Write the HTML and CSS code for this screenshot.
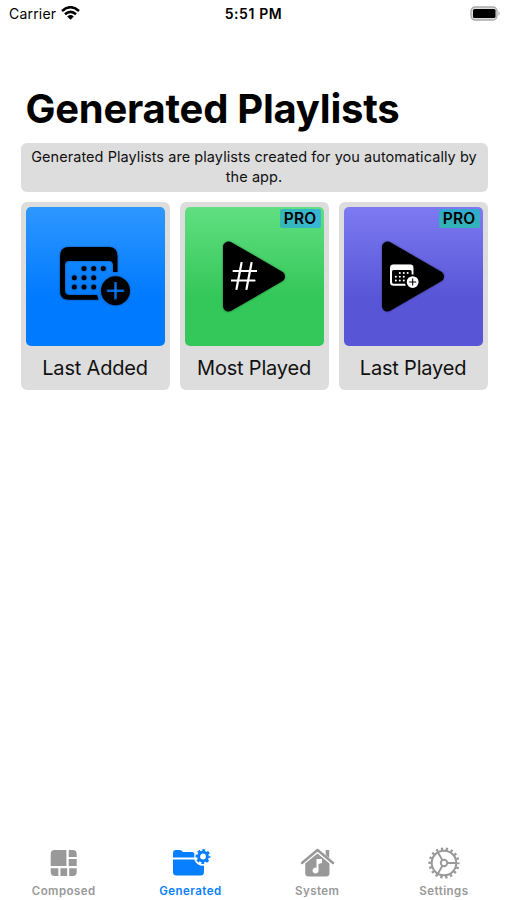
FILE: index.html
```
<!DOCTYPE html>
<html lang="en">
<head>
<meta charset="utf-8">
<title>Generated Playlists</title>
<link rel="stylesheet" href="styles.css">
</head>
<body>
<svg width="0" height="0" class="defs" aria-hidden="true">
  <symbol id="calendar" viewBox="0 0 71 59">
    <path fill-rule="evenodd" d="M9 0H48.500Q57.500 0 57.500 9V25H53V18Q53 14 49 14H9Q5 14 5 18V43.500Q5 48 9.500 48H37L38.500 52.700H9Q0 52.700 0 44V9Q0 0 9 0Z"/>
    <g>
      <circle cx="24" cy="21.400" r="2.500"/><circle cx="33.700" cy="21.400" r="2.500"/><circle cx="43.300" cy="21.400" r="2.500"/>
      <circle cx="14.300" cy="30.700" r="2.500"/><circle cx="24" cy="30.700" r="2.500"/><circle cx="33.700" cy="30.700" r="2.500"/>
      <circle cx="14.300" cy="40" r="2.500"/><circle cx="24" cy="40" r="2.500"/><circle cx="33.700" cy="40" r="2.500"/>
    </g>
    <path fill-rule="evenodd" d="M55.500 29.200a14.500 14.500 0 1 1 0 29a14.500 14.500 0 1 1 0-29ZM54.200 35V42.400H46.800V45H54.200V52.400H56.800V45H64.200V42.400H56.800V35Z"/>
  </symbol>
  <symbol id="play" viewBox="0 0 63 71">
    <path d="M5.500 6V65L56.500 35.500Z" stroke="#000" stroke-width="11" stroke-linejoin="round"/>
  </symbol>
</svg>

<div class="screen">
  <header class="status">
    <div class="carrier"><span>Carrier</span>
      <svg width="19" height="14" viewBox="0 0 19 14"><g fill="none" stroke="#000" stroke-width="2.500"><path d="M1 5Q9.500-2.600 18 5"/><path d="M4 8.300Q9.500 3.400 15 8.300"/></g><path d="M6.200 10.400Q9.500 7.700 12.800 10.400L9.500 13.800Z"/></svg>
    </div>
    <div class="time">5:51 PM</div>
    <svg class="battery" width="31" height="15" viewBox="0 0 31 15"><rect x="1" y="1" width="26" height="13" rx="4" fill="#ddd" stroke="#aaa" stroke-width="1.300"/><rect x="3" y="3" width="22.500" height="9" rx="1.500"/><path d="M28.500 5Q31 7.500 28.500 10Z" fill="#aaa"/></svg>
  </header>

  <main>
    <h1>Generated Playlists</h1>
    <p class="note">Generated Playlists are playlists created for you automatically by<br>the app.</p>
    <section class="cards">
      <article class="card">
        <div class="tile blue"><svg class="cal" width="71" height="59"><use href="#calendar"/></svg></div>
        <h2>Last Added</h2>
      </article>
      <article class="card">
        <div class="tile green"><span class="pro">PRO</span>
          <div class="play"><svg width="63" height="71"><use href="#play"/></svg><svg class="hash" width="26" height="28" viewBox="0 0 26 28"><path d="M10.500 1L5.500 27M20.500 1L15.500 27M2.500 9H25.500M.5 18.500H23.500" fill="none" stroke="#fff" stroke-width="2.200" stroke-linecap="round"/></svg></div>
        </div>
        <h2>Most Played</h2>
      </article>
      <article class="card">
        <div class="tile purple"><span class="pro">PRO</span>
          <div class="play"><svg width="63" height="71"><use href="#play"/></svg><svg class="mini" width="29" height="24.500" viewBox="0 0 71 59"><use href="#calendar"/></svg></div>
        </div>
        <h2>Last Played</h2>
      </article>
    </section>
  </main>

  <nav class="tabs">
    <a class="tab"><svg width="40" height="34" viewBox="-.7 0 40 34"><path d="M11 4H22.700V20H7V8Q7 4 11 4ZM25 4H29Q33 4 33 8V11H25ZM25 13H33V20H25ZM7 22.300H14.700V30H11Q7 30 7 26ZM16.700 22.300H23.500V30H16.700ZM25.500 22.300H33V26Q33 30 29 30H25.500Z"/></svg><span>Composed</span></a>
    <a class="tab active"><svg width="42" height="34" viewBox="-2.500 0 42 34"><path d="M1.500 11.500V7Q1.500 4 4.500 4H8Q10 4 11.500 6H20.500Q22.500 6 22.800 7.500V11.500ZM1.500 13.500H22.800Q25 20 32.500 19.800V26Q32.500 29.500 29 29.500H5Q1.500 29.500 1.500 26Z"/><circle cx="31.500" cy="10.500" r="4.400" fill="none" stroke="currentColor" stroke-width="3"/><circle cx="31.500" cy="10.500" r="6.400" fill="none" stroke="currentColor" stroke-width="2.200" stroke-dasharray="2.700 2.327" stroke-dashoffset="1.350"/></svg><span>Generated</span></a>
    <a class="tab"><svg width="40" height="34" viewBox="-.5 0 40 34"><path d="M4.500 17L20 4L35.500 17" fill="none" stroke="currentColor" stroke-width="2.500" stroke-linecap="round" stroke-linejoin="round"/><path d="M28.200 4H31.700V12L28.200 9Z"/><path fill-rule="evenodd" d="M20 7.500L32 17.500V27Q32 30.500 28.500 30.500H11Q7.700 30.500 7.700 27V17.500ZM19 13V21.700A3 3 0 1 0 21 24V18L24.500 17V13Z"/></svg><span>System</span></a>
    <a class="tab"><svg width="40" height="34" viewBox="0 0 40 34"><g fill="none" stroke="currentColor"><circle cx="20" cy="17" r="12.300" stroke-width="2"/><circle cx="20" cy="17" r="14.300" stroke-width="2.600" stroke-dasharray="2.300 2.692" stroke-dashoffset="1.150"/><circle cx="20" cy="17" r="3.200" stroke-width="1.900"/><path stroke-width="1.900" d="M23 17H32M18.400 14.200L13.700 6.100M18.400 19.800L13.700 27.900"/></g></svg><span>Settings</span></a>
  </nav>
</div>
</body>
</html>
```
FILE: styles.css
```
* { box-sizing: border-box; }
body { margin: 0; background: #fff; color: #000; font-family: Inter, "Liberation Sans", sans-serif; }
svg { display: block; }
.defs { position: absolute; }
.screen { height: 900px; display: flex; flex-direction: column; }
.status { height: 28px; padding: 0 6px 1px 9px; display: grid; grid-template-columns: 1fr auto 1fr; align-items: center; font-size: 14px; }
.carrier { display: flex; align-items: center; gap: 5px; letter-spacing: .2px; }
.carrier svg { margin-top: -2px; }
.time { margin-left: -3px; font-weight: 600; letter-spacing: .6px; }
.battery { justify-self: end; margin-top: -1px; }
main { flex: 1; padding: 57px 19.500px 0 20.500px; }
h1 { margin: 0 0 9.500px 5px; font-size: 40px; line-height: 48px; font-weight: 700; letter-spacing: -.25px; white-space: nowrap; }
.note { margin: 0 0 10px; height: 49.500px; padding: 4.500px 0; border-radius: 6px; background: #ddd; font-size: 14.500px; line-height: 20px; text-align: center; letter-spacing: .06px; white-space: nowrap; color: #111; }
.cards { display: grid; grid-template-columns: repeat(3, 1fr); gap: 10px; }
.card { height: 188px; padding: 4.500px 5px; border-radius: 6px; background: #ddd; }
.tile { position: relative; height: 139.500px; border-radius: 5px; display: flex; padding: 34px 0 0 38px; }
.blue { background: linear-gradient(#2e97ff, #007aff 65%); }
.green { background: linear-gradient(#61df81, #34c759 65%); }
.purple { background: linear-gradient(#7d7af2, #5856d6 65%); }
.cal { margin: 6px 0 0 -3.500px; filter: drop-shadow(0 0 1px rgba(0, 0, 0, .4)); }
.play { position: relative; width: 63px; height: 71px; filter: drop-shadow(0 0 1px rgba(0, 0, 0, .4)); }
.hash { position: absolute; left: 8px; top: 21.500px; }
.mini { position: absolute; left: 8px; top: 23.500px; fill: #fff; }
.pro { position: absolute; top: 2.500px; right: 3px; width: 41px; height: 18.500px; border-radius: 2px; background: linear-gradient(100deg, #32ada6, #38bad6); font-size: 15.500px; line-height: 19px; font-weight: 600; text-align: center; letter-spacing: .2px; }
.green .pro { background: linear-gradient(100deg, #35b7b4, #38b5d8); }
.purple .pro { background: linear-gradient(#32a9cf, #32b4b5); }
h2 { margin: 9px 0 0; font-size: 20px; line-height: 26px; font-weight: 400; text-align: center; letter-spacing: -.2px; white-space: nowrap; color: #111; }
.tabs { height: 60px; display: grid; grid-template-columns: repeat(4, 1fr); }
.tab { display: flex; flex-direction: column; align-items: center; padding-top: 6px; color: #999; fill: currentColor; font-size: 11.500px; line-height: 16px; font-weight: 600; letter-spacing: .45px; }
.tab span { margin-top: 3px; padding-left: .6px; }
.active { color: #087fff; }
```
